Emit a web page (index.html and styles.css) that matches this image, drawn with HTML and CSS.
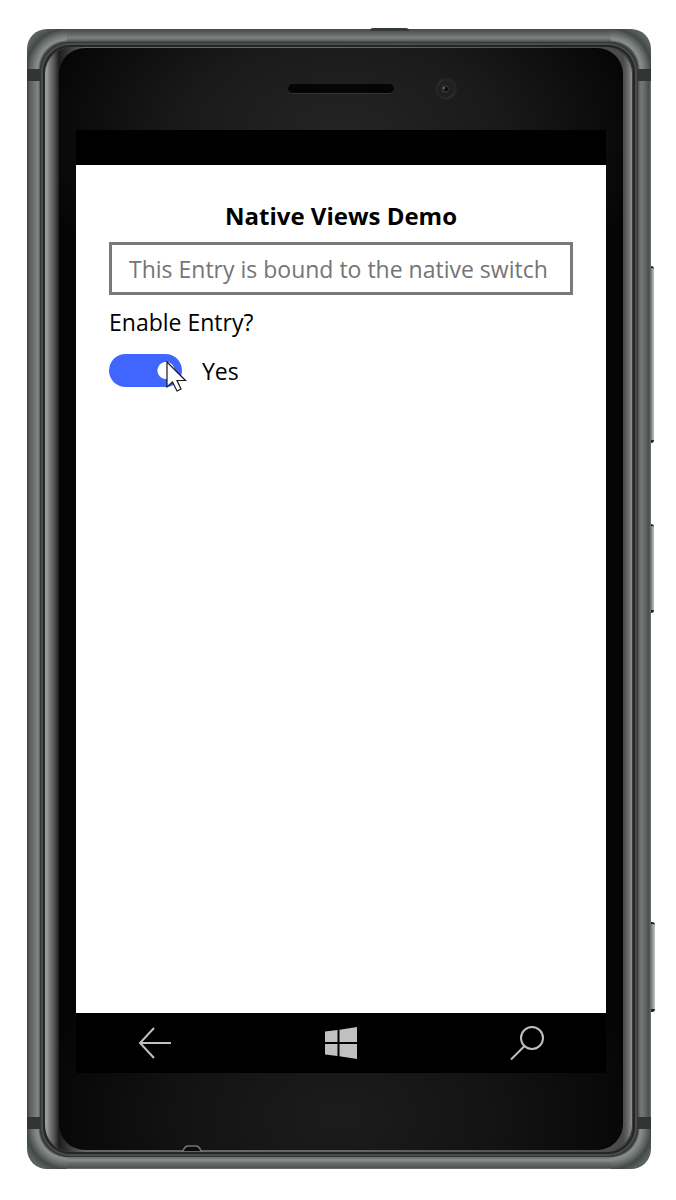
FILE: index.html
```html
<!DOCTYPE html>
<html lang="en">
<head>
<meta charset="utf-8">
<meta name="viewport" content="width=device-width, initial-scale=1">
<title>Native Views Demo</title>
<link rel="stylesheet" href="styles.css">
</head>
<body>
<div class="phone">
  <span class="top-ridge"></span>
  <span class="side-button volume"></span>
  <span class="side-button power"></span>
  <span class="side-button shutter"></span>
  <div class="groove">
    <div class="chrome">
      <div class="glass">
        <div class="earpiece">
          <span class="speaker"></span>
          <svg class="camera" width="24" height="24" viewBox="0 0 24 24" aria-hidden="true">
            <circle cx="12" cy="12" r="11" fill="#242425"/>
            <circle cx="12" cy="12" r="8" fill="#1f1f20"/>
            <path d="M4 8a9 9 0 0 1 6-5M20 16a9 9 0 0 1-7 5" fill="none" stroke="#2c2c2e" stroke-width="2"/>
            <circle cx="11" cy="12" r="4" fill="#303033"/>
            <circle cx="12" cy="12" r="2" fill="#09090b"/>
            <circle cx="10" cy="11" r="1" fill="#737378"/>
          </svg>
        </div>
        <div class="screen">
          <div class="status-bar"></div>
          <main class="content">
            <h1 class="title">Native Views Demo</h1>
            <input class="entry" type="text" aria-label="Entry" placeholder="This Entry is bound to the native switch">
            <label class="caption" for="enable">Enable Entry?</label>
            <div class="switch-row">
              <input class="switch" type="checkbox" role="switch" id="enable" checked>
              <label for="enable">Yes</label>
              <svg class="pointer" width="22" height="32" viewBox="0 0 22 32" aria-hidden="true">
                <path d="M1 1V26L6.500 21L11 30L15 28L11 19.500H19.500Z" fill="#fff" stroke="#171724" stroke-width="1.200"/>
              </svg>
            </div>
          </main>
          <nav class="nav-bar">
            <button class="nav-button" type="button" aria-label="Back">
              <svg width="34" height="34" viewBox="0 0 34 34"><path d="M33 17H2M16 2L2 17L16 32" fill="none" stroke="#c0c0c0" stroke-width="2"/></svg>
            </button>
            <button class="nav-button" type="button" aria-label="Start">
              <svg width="34" height="34" viewBox="0 0 34 34"><path d="M1 5.500L13.500 4V16H1ZM15.500 3.700L33 1V16H15.500ZM1 18H13.500V30L1 28.500ZM15.500 18H33V33L15.500 30.300Z" fill="#c0c0c0"/></svg>
            </button>
            <button class="nav-button" type="button" aria-label="Search">
              <svg width="34" height="34" viewBox="0 0 34 34"><circle cx="22" cy="12" r="11" fill="none" stroke="#c0c0c0" stroke-width="2"/><path d="M14.500 20L1 33.500" stroke="#c0c0c0" stroke-width="2"/></svg>
            </button>
          </nav>
        </div>
      </div>
    </div>
    <svg class="microphone" width="22" height="8" viewBox="0 0 22 8" aria-hidden="true">
      <path d="M1 6H2Q4 1 7 1H15Q18 1 20 6H21" fill="#0a0a0a" stroke="#777" stroke-width="1.500"/>
    </svg>
  </div>
</div>
</body>
</html>
```
FILE: styles.css
```css
* { box-sizing: border-box; }

body {
  margin: 0;
  min-height: 100vh;
  padding: 29px 25px 31px 27px;
  display: flex;
  background: #fff;
  font-family: "Open Sans", "Noto Sans", sans-serif;
  font-size: 23px;
  line-height: 32px;
  color: #000;
}

.phone {
  --rim: #292c2b 20px, #474b49 27px, #8b8f8d 29px, #7d817f 32px, #5a5f5c 37px, #414946 40px, #5c615e 46px;
  position: relative;
  flex: 1;
  min-width: 0;
  display: flex;
  padding: 13px 13px 12px;
  border-radius: 20px;
  background:
    linear-gradient(#333534, #333534) 0 40px / 100% 12px no-repeat,
    linear-gradient(#333534, #333534) 0 calc(100% - 40px) / 100% 12px no-repeat,
    radial-gradient(circle at 100% 100%, var(--rim)) 0 0 / 40px 40px no-repeat,
    radial-gradient(circle at 0 100%, var(--rim)) 100% 0 / 40px 40px no-repeat,
    radial-gradient(circle at 100% 0, var(--rim)) 0 100% / 40px 40px no-repeat,
    radial-gradient(circle at 0 0, var(--rim)) 100% 100% / 40px 40px no-repeat,
    linear-gradient(#414946, #555b58 3px, #7d817f 9px, #656967 11px, #474b49 13px) 0 0 / 100% 13px no-repeat,
    linear-gradient(#676b69, #8c908e 3px, #686c6a 6px, #4c504e 11px, #888 12px) 0 100% / 100% 12px no-repeat,
    linear-gradient(90deg, #3f4341, #5a5e5c 3px, #767a78 9px, #858987 11px, #555 13px, #555 calc(100% - 13px), #747876 calc(100% - 10px), #656967 calc(100% - 6px), #474d4a calc(100% - 2px), #747875);
}

.top-ridge {
  position: absolute;
  top: -1px;
  left: 55%;
  width: 39px;
  height: 3px;
  border-radius: 3px 3px 0 0;
  background: #343a37;
}

.side-button {
  position: absolute;
  right: -3px;
  width: 3px;
  border: solid #222;
  border-width: 2px 0 3px;
  border-radius: 0 3px 3px 0;
  background: linear-gradient(90deg, #777, #c9c5c7);
}
.volume { top: 237px; height: 177px; }
.power { top: 495px; height: 89px; }
.shutter { top: 893px; right: -4px; width: 4px; height: 90px; }

.groove {
  position: relative;
  flex: 1;
  min-width: 0;
  display: flex;
  padding: 5px 6px 5px 5px;
  border-radius: 30px;
  background: #3b3d3c;
  box-shadow: inset 0 0 0 1px #343635, inset 0 0 0 3px #494c4a, inset 0 0 0 5px #242525;
}

.microphone {
  position: absolute;
  bottom: 4px;
  left: 141px;
}

.chrome {
  flex: 1;
  min-width: 0;
  display: flex;
  padding: 1px 9px 2px 14px;
  border-radius: 27px;
  background: linear-gradient(90deg, #a0a0a0, #999 2px, #777 5px, #555 9px, #1d1d1d 14px, #666 40px, #666 50%, #4a4a4a calc(100% - 9px), #626262 calc(100% - 5px), #858585 calc(100% - 1px), #999);
}

.glass {
  flex: 1;
  min-width: 0;
  display: flex;
  flex-direction: column;
  padding: 0 17px 77px;
  border-radius: 26px;
  background:
    radial-gradient(ellipse 55% 200px at 50% 8%, #242424, #1a1a1a 50%, transparent) no-repeat,
    radial-gradient(ellipse 55% 200px at 50% 97%, #1c1c1c, #131313 50%, transparent) no-repeat,
    #050505;
}

.earpiece {
  display: grid;
  grid-template-columns: 1fr 106px 1fr;
  align-items: center;
  height: 82px;
}
.speaker {
  grid-column: 2;
  height: 10px;
  border-radius: 5px;
  background: #050505;
  border-bottom: 1px solid #353535;
}
.camera { margin-left: 40px; }

.screen {
  flex: 1;
  display: flex;
  flex-direction: column;
  background: #000;
}
.status-bar { height: 35px; }

.content {
  flex: 1;
  display: flex;
  flex-direction: column;
  padding: 35px 33px;
  background: #fff;
}

.title {
  margin: 0 0 10px;
  font-size: 24px;
  line-height: 32px;
  font-weight: 700;
  text-align: center;
}

.entry {
  width: 100%;
  height: 53px;
  margin-bottom: 11px;
  padding: 0 12px 0 17px;
  border: 3px solid #7a7a7a;
  border-radius: 0;
  background: #fff;
  font: inherit;
  color: #000;
}
.entry::placeholder { color: #757575; opacity: 1; }

.caption { margin-bottom: 16px; }

.switch-row {
  position: relative;
  display: flex;
  align-items: center;
  gap: 20px;
}
.switch {
  appearance: none;
  width: 73px;
  height: 33px;
  margin: 0;
  border-radius: 17px;
  background: radial-gradient(circle at 57px 50%, #fff 8px, #4066ff 9px);
}
.pointer {
  position: absolute;
  top: 7px;
  left: 57px;
}

.nav-bar {
  display: flex;
  justify-content: space-between;
  padding: 0 60px;
  height: 60px;
}
.nav-button {
  display: flex;
  align-items: center;
  padding: 0 2px;
  border: 0;
  background: none;
}
```
